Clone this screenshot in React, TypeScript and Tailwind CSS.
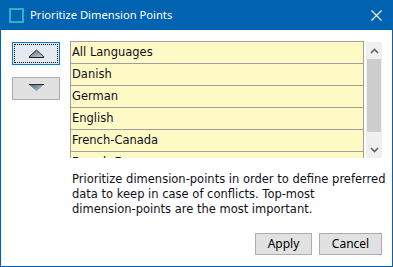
import React from "react";

const listFont = { fontFamily: '"DejaVu Sans", sans-serif' };
const uiFont = { fontFamily: '"Noto Sans", "Open Sans", sans-serif' };

function Tri({ up }: { up: boolean }) {
  return (
    <svg width="17" height="9" viewBox="0 0 17 9">
      <defs>
        <linearGradient id={up ? "gu" : "gd"} x1="0" y1="0" x2="1" y2="1">
          <stop offset="0" stopColor="#55677a" />
          <stop offset="1" stopColor="#c3d6d6" />
        </linearGradient>
      </defs>
      {up ? (
        <>
          <polygon points="1,8 8.5,1 16,8" fill="url(#gu)" />
          <polyline points="1,8 8.5,1 16,8" fill="none" stroke="#2b2b2b" strokeWidth="1" />
          <line x1="1" y1="8.5" x2="16" y2="8.5" stroke="#1d1d1d" strokeWidth="1" />
        </>
      ) : (
        <>
          <polygon points="1,1 8.5,8 16,1" fill="url(#gd)" />
          <line x1="1" y1="0.5" x2="16" y2="0.5" stroke="#2b2b2b" strokeWidth="1" />
          <polyline points="1,1 8.5,8 16,1" fill="none" stroke="#f4f4f4" strokeWidth="1" />
        </>
      )}
    </svg>
  );
}

const rows = ["All Languages", "Danish", "German", "English", "French-Canada", "French-France"];

export default function App() {
  return (
    <div className="w-[393px] h-[267px] bg-[#0063b1] flex flex-col px-px pb-px">
      <div className="h-[30px] shrink-0 flex items-center">
        <div className="ml-[8px] w-[15px] h-[15px] border-2 border-[#2fb1c4]" />
        <span className="ml-[6px] text-white text-[11.2px] leading-none" style={uiFont}>
          Prioritize Dimension Points
        </span>
        <svg className="ml-auto mr-[10px]" width="11" height="11" viewBox="0 0 11 11">
          <path d="M0.5 0.5 L10.5 10.5 M10.5 0.5 L0.5 10.5" stroke="#ffffff" strokeWidth="1.1" />
        </svg>
      </div>
      <div className="flex-1 bg-white flex flex-col pt-[11px] pl-[11px] pr-[10px] pb-[11px]">
        <div className="flex">
          <div className="w-[48px] mr-[10px] flex flex-col gap-[12px] pt-[1px]">
            <div className="h-[23px] border border-[#0078d7] bg-[#e5eaf2] p-px">
              <div className="h-full border border-dotted border-black flex items-center justify-center">
                <Tri up />
              </div>
            </div>
            <div className="h-[23px] border border-[#adadad] bg-[#e1e1e1] flex items-center justify-center">
              <Tri up={false} />
            </div>
          </div>
          <div className="flex-1 h-[117px] flex">
            <div className="w-[294px] h-full overflow-hidden" style={listFont}>
              {rows.map((r, i) => (
                <div
                  key={r}
                  className={
                    "bg-[#fff9c6] border-l border-r border-b border-[#a0a0a0] pl-[1px] flex items-center text-[11.5px] text-[#101020] " +
                    (i === 0 ? "border-t h-[23px]" : "h-[22px]")
                  }
                >
                  {r}
                </div>
              ))}
            </div>
            <div className="ml-[2px] w-[16px] mt-px h-[116px] bg-[#f0f0f0] flex flex-col">
              <div className="h-[17px] flex items-center justify-center">
                <svg width="9" height="6" viewBox="0 0 9 6">
                  <path d="M1 5 L4.5 1.5 L8 5" fill="none" stroke="#606060" strokeWidth="1.6" />
                </svg>
              </div>
              <div className="mx-px h-[73px] bg-[#cdcdcd]" />
              <div className="flex-1" />
              <div className="h-[17px] flex items-center justify-center">
                <svg width="9" height="6" viewBox="0 0 9 6">
                  <path d="M1 1 L4.5 4.5 L8 1" fill="none" stroke="#606060" strokeWidth="1.6" />
                </svg>
              </div>
            </div>
          </div>
        </div>
        <div
          className="ml-[60px] mt-[14px] text-[11.5px] leading-[15px] text-[#101020] whitespace-nowrap"
          style={listFont}
        >
          Prioritize dimension-points in order to define preferred
          <br />
          data to keep in case of conflicts. Top-most
          <br />
          dimension-points are the most important.
        </div>
        <div className="mt-auto flex justify-end gap-[7px]" style={uiFont}>
          <button className="w-[57px] h-[22px] border border-[#adadad] bg-[#e1e1e1] text-[12px] text-black leading-none">
            Apply
          </button>
          <button className="w-[63px] h-[22px] border border-[#adadad] bg-[#e1e1e1] text-[12px] text-black leading-none">
            Cancel
          </button>
        </div>
      </div>
    </div>
  );
}
